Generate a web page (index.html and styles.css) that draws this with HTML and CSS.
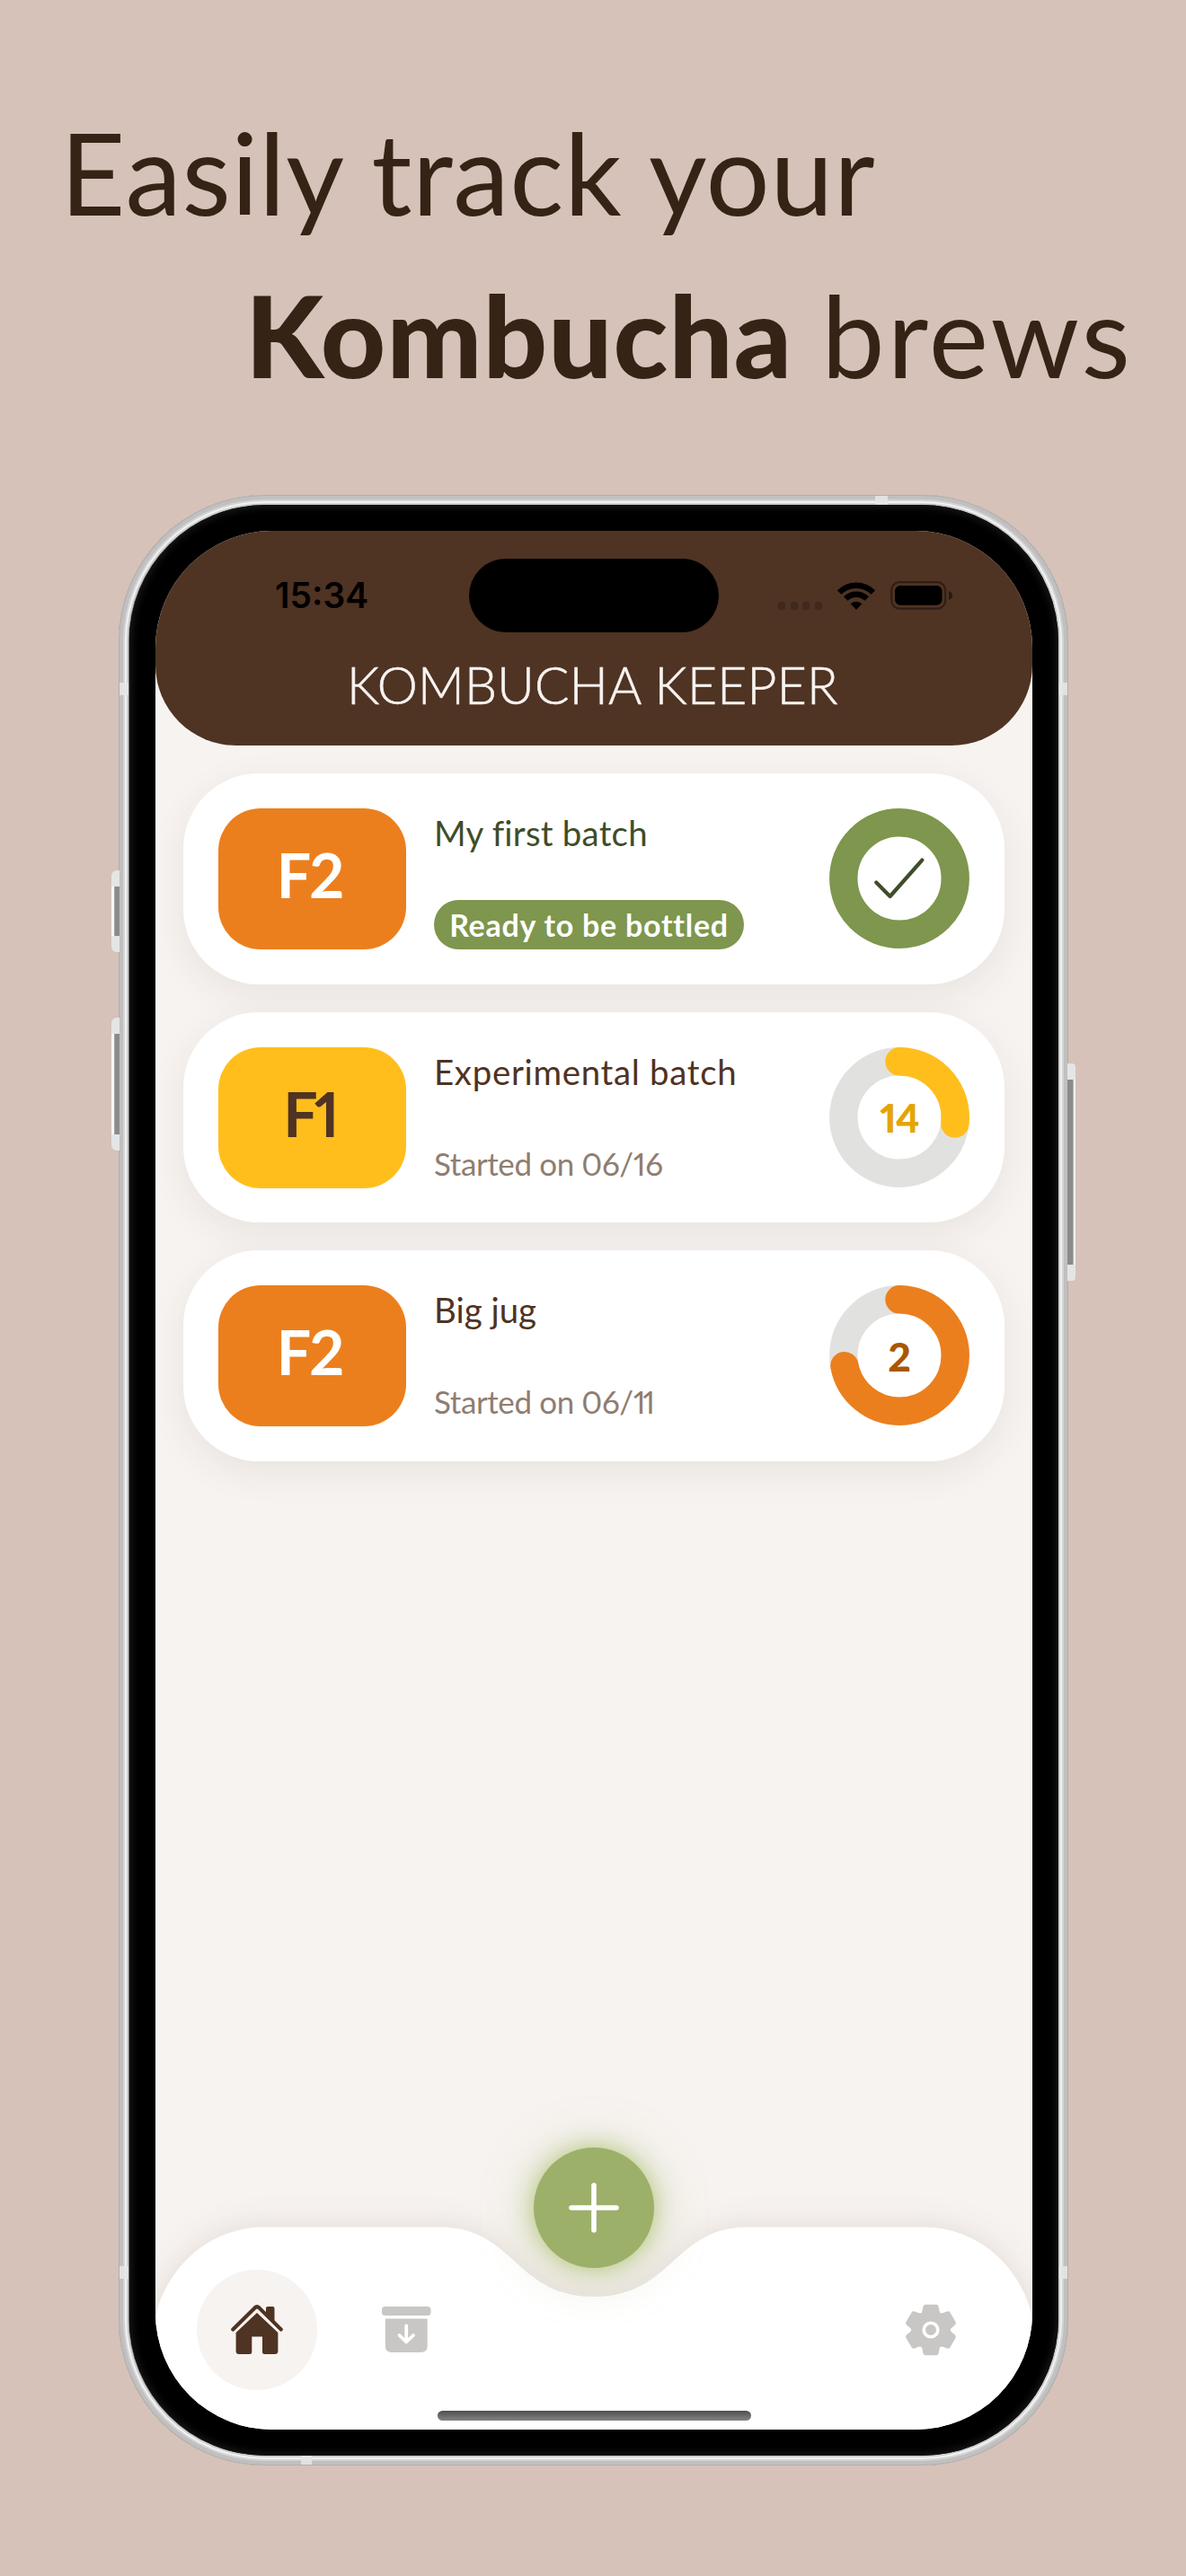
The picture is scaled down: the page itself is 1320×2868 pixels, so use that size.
FILE: index.html
```html
<!DOCTYPE html>
<html lang="en">
<head>
<meta charset="utf-8">
<title>Kombucha Keeper</title>
<link rel="stylesheet" href="styles.css">
</head>
<body>
<main class="poster">
  <h1 class="headline">
    <span class="line line-first">Easily track your</span>
    <span class="line line-second"><strong>Kombucha</strong> <span class="brews">brews</span></span>
  </h1>
  <div class="phone">
    <i class="side-button volume-up"></i>
    <i class="side-button volume-down"></i>
    <i class="side-button power"></i>
    <i class="band band-left-top"></i><i class="band band-right-top"></i>
    <i class="band band-left-bottom"></i><i class="band band-right-bottom"></i>
    <i class="band band-top"></i><i class="band band-bottom"></i>
    <div class="bezel">
      <div class="screen">
        <header class="app-header">
          <div class="status">
            <span class="time">15:34</span>
            <span class="island"></span>
            <span class="signals">
              <span class="dots"><i></i><i></i><i></i><i></i></span>
              <svg class="wifi" viewBox="0 0 42 31"><g fill="none" stroke="#000" stroke-width="6.4"><path d="M2.2 11.6A26.6 26.6 0 0 1 39.8 11.6"/><path d="M9.2 18.6A16.7 16.7 0 0 1 32.8 18.6"/></g><path d="M14.6 24.3A9 9 0 0 1 27.4 24.3L21 30.8Z"/></svg>
              <svg class="battery" viewBox="0 0 70 32"><rect x="1.2" y="1.2" width="60" height="29.4" rx="9" fill="none" stroke="#000" stroke-opacity=".4" stroke-width="2.2"/><rect x="5" y="5" width="52.5" height="21.8" rx="6"/><path d="M65 11Q69 12.5 69 16T65 21Z" opacity=".5"/></svg>
            </span>
          </div>
          <h2 class="app-title">KOMBUCHA KEEPER</h2>
        </header>
        <section class="batches">
          <article class="card">
            <div class="badge badge-f2">F2</div>
            <div class="info"><h3 class="name name-ready">My first batch</h3><p class="pill">Ready to be bottled</p></div>
            <div class="ring"><svg viewBox="0 0 156 156"><circle class="track done" cx="78" cy="78" r="62.2"/><path class="check" d="M52.3 82.6L67.6 98L103.3 57.6"/></svg></div>
          </article>
          <article class="card">
            <div class="badge badge-f1">F1</div>
            <div class="info"><h3 class="name name-long">Experimental batch</h3><p class="started">Started on 06/16</p></div>
            <div class="ring"><svg viewBox="0 0 156 156"><circle class="track" cx="78" cy="78" r="62.2"/><circle class="arc arc-f1" cx="78" cy="78" r="62.2" pathLength="100" stroke-dasharray="26.8 100"/></svg><span class="days days-f1">14</span></div>
          </article>
          <article class="card">
            <div class="badge badge-f2">F2</div>
            <div class="info"><h3 class="name">Big jug</h3><p class="started">Started on 06/<span class="ones">11</span></p></div>
            <div class="ring"><svg viewBox="0 0 156 156"><circle class="track" cx="78" cy="78" r="62.2"/><circle class="arc arc-f2" cx="78" cy="78" r="62.2" pathLength="100" stroke-dasharray="72 100"/></svg><span class="days days-f2">2</span></div>
          </article>
        </section>
        <nav class="tabs">
          <svg class="tabs-shape" viewBox="0 0 976 226"><path d="M-5 140C-5 60 50 .5 122 .5H316C400 .5 400 78 488 78S576 .5 660 .5H854C926 .5 981 60 981 140V240H-5Z" fill="#fff"/></svg>
          <a class="tab tab-home"><svg viewBox="0 0 58 56"><path d="M39 12V4Q39 2 41 2H46.500Q48.500 2 48.500 4V22Z"/><path d="M2.300 27.500L26.600 3.400Q29 1.200 31.400 3.400L55.700 27.500" fill="none" stroke="#4f3323" stroke-width="4.200" stroke-linecap="round" stroke-linejoin="round"/><path d="M29 5.800L54 30.500" fill="none" stroke="#f7f3f0" stroke-width="2.200"/><path d="M29 9L52.400 31V51.500Q52.400 55 49 55H37.500Q35 55 35 52.500V35.500H23.300V52.500Q23.300 55 20.800 55H9Q5.600 55 5.600 51.500V31Z"/></svg></a>
          <a class="tab tab-archive"><svg viewBox="0 0 55 52"><rect width="54.5" height="10" rx="3.500"/><path d="M3.800 13.500H50.700V44Q50.700 51 43.700 51H10.800Q3.800 51 3.800 44Z"/><path d="M27.200 21.500V39M19.500 32L27.200 39.500L35 32" fill="none" stroke="#fff" stroke-width="3.800" stroke-linecap="round" stroke-linejoin="round"/></svg></a>
          <a class="tab tab-settings"><svg viewBox="-29 -29 58 58"><defs><path id="tooth" d="M-11.500-17C-9.500-20-9.300-22-8.700-25.800Q-8.300-28.300-6-28.300H6Q8.300-28.300 8.700-25.800C9.300-22 9.500-20 11.500-17Z"/></defs><circle r="21.500"/><use href="#tooth"/><use href="#tooth" transform="rotate(60)"/><use href="#tooth" transform="rotate(120)"/><use href="#tooth" transform="rotate(180)"/><use href="#tooth" transform="rotate(240)"/><use href="#tooth" transform="rotate(300)"/><circle r="7.800" fill="none" stroke="#fff" stroke-width="3.600"/></svg></a>
          <a class="fab"><svg viewBox="0 0 56 56"><path d="M28 3V53M3 28H53" fill="none" stroke="#fff" stroke-width="5.600" stroke-linecap="round"/></svg></a>
          <i class="home-indicator"></i>
        </nav>
      </div>
    </div>
  </div>
</main>
</body>
</html>
```
FILE: styles.css
```css
* { box-sizing: border-box; }
body { margin: 0; background: #d6c2b9; font-family: Lato, "Noto Sans", sans-serif; font-variant-numeric: proportional-nums; }
h1, h2, h3, p { margin: 0; font-weight: 400; }
i { display: block; }

.poster { width: 1320px; height: 2868px; padding-top: 101px; overflow: hidden; }
.headline { height: 450px; font-size: 125.6px; line-height: 181px; color: #352316; white-space: nowrap; }
.line { display: block; }
.line-first { padding-left: 67px; letter-spacing: .6px; }
.line-second { padding-left: 273px; }
.line-second strong { font-weight: 900; letter-spacing: 1.1px; }
.brews { letter-spacing: 3px; }

.phone {
  position: relative; width: 1057px; height: 2194px; margin-left: 132px; padding: 11px 11px 11px 12px;
  border-radius: 163px; background: #000;
  box-shadow: inset 0 0 0 1px #b3aeaa, inset 0 0 0 5px #c0c0c0, inset 0 0 0 7px #d4d4d4, inset 0 0 0 9px #f2f2f2, inset 0 0 0 11px #cfcfcf, inset 0 0 0 12px #6a6a6a;
}
.bezel {
  height: 100%; padding: 29px; border-radius: 152px; background: #000;
  box-shadow: inset 0 0 10px 2px #1c1c1c;
}
.screen {
  position: relative; display: flex; flex-direction: column; width: 976px; height: 2114px;
  border-radius: 130px; overflow: hidden; background: #f7f3f0;
}
.side-button { position: absolute; left: -8px; width: 9px; border-radius: 6px 0 0 6px; background: linear-gradient(90deg, #f5f5f5 0 35%, #8b8b8b 40%); border: solid #e5e5e5; border-width: 18px 0; }
.volume-up { top: 418px; height: 91px; }
.volume-down { top: 582px; height: 148px; }
.power { left: auto; right: -8px; top: 633px; height: 242px; border-radius: 0 4px 4px 0; background: linear-gradient(270deg, #f0f0f0 0 25%, #8b8b8b 30%); }
.band { position: absolute; background: #e6e6e6; opacity: .85; }
.band-left-top, .band-left-bottom { left: 1px; width: 10px; height: 14px; }
.band-right-top, .band-right-bottom { right: 1px; width: 9px; height: 14px; }
.band-left-top, .band-right-top { top: 209px; }
.band-left-bottom, .band-right-bottom { top: 1972px; }
.band-top { top: 1px; left: 842px; width: 14px; height: 10px; }
.band-bottom { bottom: 1px; left: 203px; width: 12px; height: 10px; }

.app-header { flex: none; height: 239px; padding-top: 31px; border-radius: 0 0 90px 90px; background: #4f3323; }
.status { display: grid; grid-template-columns: 349px 278px 349px; align-items: center; height: 82px; }
.time { padding-left: 133px; font: 600 39px/48px Inter, sans-serif; color: #000; }
.island { height: 82px; border-radius: 41px; background: #000; }
.signals { display: flex; align-items: center; padding-left: 66px; }
.dots { display: flex; gap: 5.5px; padding-top: 22px; }
.dots i { width: 8px; height: 9px; border-radius: 3px; background: #3f291c; }
.wifi { width: 42px; height: 31px; margin-left: 17px; }
.battery { width: 70px; height: 32px; margin-left: 17px; }
.app-title { margin-top: 23px; padding-right: 3px; text-align: center; font-size: 57px; line-height: 70px; font-weight: 300; letter-spacing: .25px; color: #f7f3f0; -webkit-text-stroke: .6px #f7f3f0; }

.batches { flex: 1; display: flex; flex-direction: column; gap: 31px; padding: 31px 31px 0; }
.card { display: flex; flex: none; height: 234.5px; padding: 39px; border-radius: 84px; background: #fff; box-shadow: 0 12px 40px rgba(60, 45, 35, .08); }
.badge { display: flex; align-items: center; justify-content: center; width: 209px; height: 157px; padding: 0 6px 10px 0; border-radius: 47px; font-size: 68px; font-weight: 700; letter-spacing: -2px; }
.badge-f2 { background: #ec7f1d; color: #fff; }
.badge-f1 { background: #ffbe1b; color: #4f3323; letter-spacing: -4px; }
.info { display: flex; flex: 1; flex-direction: column; align-items: flex-start; justify-content: space-between; height: 157px; padding-left: 31px; white-space: nowrap; }
.name { font-size: 38.4px; line-height: 54px; color: #4f3323; }
.name-ready { color: #3f4d29; letter-spacing: .25px; }
.name-long { letter-spacing: .7px; }
.pill { width: 345px; border-radius: 28px; background: #7e964d; color: #fff; font-size: 34px; line-height: 55px; font-weight: 700; letter-spacing: .75px; text-align: center; }
.started { font-size: 35px; line-height: 55px; letter-spacing: -.4px; color: #8f7d71; }
.ones { letter-spacing: -3.5px; }
.ring { position: relative; width: 156px; height: 156px; }
.ring svg { display: block; width: 156px; height: 156px; }
.track, .arc { fill: none; stroke: #e1e1df; stroke-width: 31.4px; }
.done { stroke: #7e964d; }
.arc { stroke-linecap: round; transform: rotate(-90deg); transform-origin: 78px 78px; }
.arc-f1 { stroke: #ffbe1b; }
.arc-f2 { stroke: #ec7f1d; }
.check { fill: none; stroke: #3f4d29; stroke-width: 4.2px; stroke-linecap: round; stroke-linejoin: round; }
.days { position: absolute; inset: 0; display: flex; align-items: center; justify-content: center; font-size: 44.5px; font-weight: 900; }
.days-f1 { color: #e3a503; letter-spacing: -1px; }
.days-f2 { color: #ab5600; }

.tabs { position: relative; display: flex; flex: none; align-items: flex-start; height: 226px; padding: 48px 46px 0; }
.tabs-shape { position: absolute; inset: 0; width: 976px; height: 226px; overflow: visible; filter: drop-shadow(0 0 18px rgba(79, 51, 35, .12)); }
.tab { position: relative; display: flex; align-items: center; justify-content: center; width: 134px; height: 134px; border-radius: 50%; fill: #c8c7c5; }
.tab-home { background: #f7f3f0; fill: #4f3323; }
.tab-home svg { width: 58px; height: 56px; }
.tab-archive { margin-left: 32px; }
.tab-archive svg { width: 55px; height: 52px; }
.tab-settings { margin-left: auto; }
.tab-settings svg { width: 58px; height: 58px; }
.fab { position: absolute; left: 421px; top: -88px; display: flex; align-items: center; justify-content: center; width: 134px; height: 134px; border-radius: 50%; background: #9cb06a; box-shadow: 0 0 24px rgba(156, 185, 80, .65), 0 4px 60px rgba(156, 176, 106, .4); }
.fab svg { width: 56px; height: 56px; }
.home-indicator { position: absolute; left: 314px; bottom: 10px; width: 349px; height: 11px; border-radius: 6px; background: linear-gradient(#4e4e4e, #848484); }
```
